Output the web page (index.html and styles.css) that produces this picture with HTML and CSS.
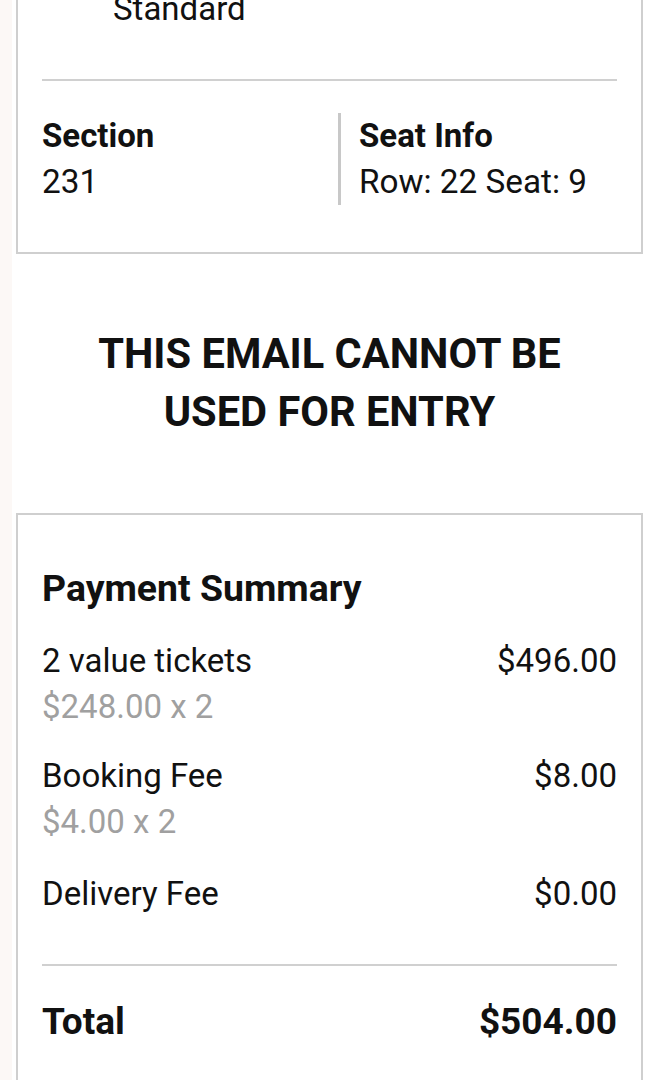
FILE: index.html
```html
<!DOCTYPE html>
<html>
<head>
<meta charset="utf-8">
<link rel="stylesheet" href="styles.css">
</head>
<body>
<div class="page">
  <div class="card ticket">
    <div class="ticket-type">Standard</div>
    <hr class="rule rule-top">
    <div class="info">
      <div class="info-col">
        <div class="info-label">Section</div>
        <div class="info-value">231</div>
      </div>
      <div class="info-col info-col-seat">
        <div class="info-label">Seat Info</div>
        <div class="info-value">Row: 22 Seat: 9</div>
      </div>
    </div>
  </div>

  <h1 class="notice">THIS EMAIL CANNOT BE<br>USED FOR ENTRY</h1>

  <div class="card summary">
    <h2 class="summary-title">Payment Summary</h2>
    <div class="line line-first">
      <div class="line-main">
        <div class="line-label">2 value tickets</div>
        <div class="line-sub">$248.00 x 2</div>
      </div>
      <div class="line-amount">$496.00</div>
    </div>
    <div class="line line-second">
      <div class="line-main">
        <div class="line-label">Booking Fee</div>
        <div class="line-sub">$4.00 x 2</div>
      </div>
      <div class="line-amount">$8.00</div>
    </div>
    <div class="line line-third">
      <div class="line-main">
        <div class="line-label">Delivery Fee</div>
      </div>
      <div class="line-amount">$0.00</div>
    </div>
    <hr class="rule rule-total">
    <div class="line total">
      <div class="line-label">Total</div>
      <div class="line-amount">$504.00</div>
    </div>
  </div>
</div>
</body>
</html>
```

FILE: styles.css
```css
html, body {
  margin: 0;
  padding: 0;
  background: #ffffff;
}

body {
  font-family: Roboto, "Noto Sans", Arial, sans-serif;
  color: #111111;
  overflow: hidden;
  height: 1080px;
}

.page {
  border-left: 12px solid #fcf8f6;
  padding-left: 4px;
  padding-right: 5px;
}

.card {
  border: 2px solid #cfcfcf;
  background: #fff;
  padding-left: 24px;
  padding-right: 24px;
}

.ticket {
  margin-top: -40px;
  padding-top: 24px;
  padding-bottom: 47px;
}

.ticket-type {
  font-size: 33px;
  line-height: 46px;
  padding-left: 71px;
}

.rule {
  border: 0;
  height: 2px;
  background: #d0d0d0;
  margin: 0;
}

.rule-top {
  margin-top: 47px;
}

.info {
  display: flex;
  margin-top: 32px;
}

.info-col {
  flex: 0 0 296px;
}

.info-col-seat {
  flex: 1;
  border-left: 3px solid #c8c8c8;
  padding-left: 18px;
}

.info-label {
  font-size: 33px;
  line-height: 46px;
  font-weight: 700;
}

.info-value {
  font-size: 33.3px;
  line-height: 46px;
}

.notice {
  margin: 71px 0 0 0;
  text-align: center;
  font-size: 41.6px;
  line-height: 58px;
  font-weight: 700;
  height: 116px;
}

.summary {
  margin-top: 72px;
  padding-top: 50px;
  padding-bottom: 40px;
}

.summary-title {
  margin: 0;
  font-size: 37.4px;
  line-height: 46px;
  font-weight: 700;
}

.line {
  display: flex;
  justify-content: space-between;
  font-size: 33px;
  line-height: 46px;
}

.line-first { margin-top: 27px; }
.line-second { margin-top: 23px; }
.line-third { margin-top: 26px; }

.line-sub {
  color: #a0a0a0;
}

.rule-total {
  margin-top: 47px;
}

.total {
  margin-top: 33px;
  font-size: 37px;
  font-weight: 700;
}
```
